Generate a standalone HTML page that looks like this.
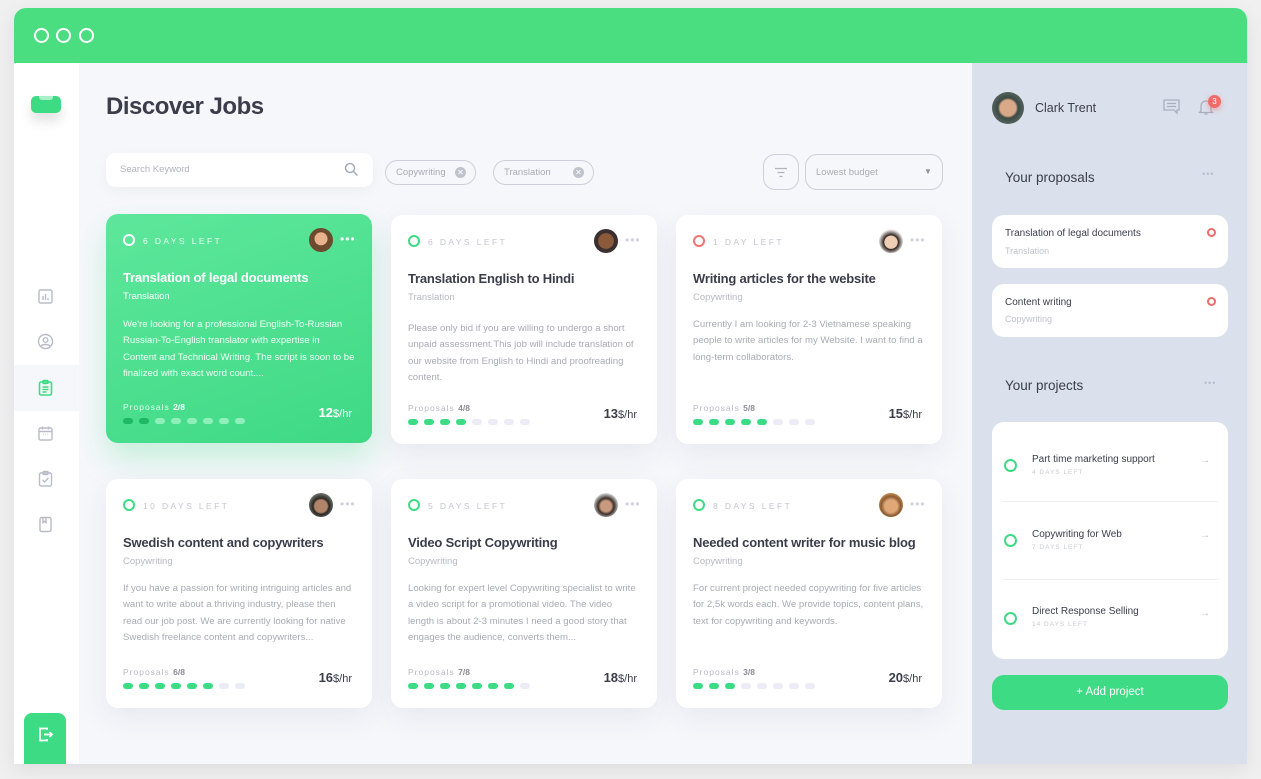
<!DOCTYPE html>
<html><head><meta charset="utf-8">
<style>
*{margin:0;padding:0;box-sizing:border-box}
body{width:1261px;height:779px;background:#f0f0f1;font-family:"Liberation Sans",sans-serif;position:relative;overflow:hidden;color:#3b3d4a}
.abs{position:absolute}
.win{position:absolute;left:14px;top:8px;width:1233px;height:756px;background:#f6f7fb;overflow:hidden;border-radius:12px 12px 0 0;box-shadow:0 6px 20px rgba(0,0,0,.08)}
.hdr{position:absolute;left:0;top:0;width:1233px;height:55px;background:#4ade80}
.hdr i{position:absolute;top:20px;width:15px;height:15px;border:2px solid #fff;border-radius:50%}
.side{position:absolute;left:0;top:55px;width:65px;height:701px;background:#fff}
.right{position:absolute;left:958px;top:55px;width:275px;height:701px;background:#dbe1ec}
.card{position:absolute;width:266px;height:229px;background:#fff;border-radius:12px;box-shadow:0 10px 30px rgba(40,50,80,.07)}
.card .c{position:absolute;left:17px;top:20px;width:12px;height:12px;border:2.5px solid #3ddc84;border-radius:50%}
.card .d{position:absolute;left:37px;top:22px;font-size:8.5px;letter-spacing:2.4px;color:#c4c6d0}
.card .av{position:absolute;left:203px;top:14px;width:24px;height:24px;border-radius:50%}
.card .m{position:absolute;left:234px;top:18px;font-size:12px;color:#cfd1dc;letter-spacing:1px}
.card .t{position:absolute;left:17px;top:56px;font-size:13px;font-weight:bold;color:#3b3d4a;letter-spacing:-.2px}
.card .k{position:absolute;left:17px;top:77px;font-size:9.5px;color:#b8bac4}
.card .p{position:absolute;left:17px;top:106px;width:232px;font-size:9.6px;line-height:16.3px;color:#a9abb5}
.card .pr{position:absolute;left:17px;top:188px;font-size:8.5px;letter-spacing:1px;color:#b8bac4}
.card .pr b{color:#8c8e99;letter-spacing:0}
.card .dots{position:absolute;left:17px;top:204px;display:flex;gap:6px}
.card .dots span{width:10px;height:6px;border-radius:3px;background:#ebecf5}
.card .dots span.on{background:#3ddc84}
.card .price{position:absolute;right:20px;top:191px;font-size:13px;font-weight:bold;color:#3b3d4a}
.card .price small{font-size:11px;font-weight:normal}
.g{background:linear-gradient(160deg,#5ee79c,#3ed985);box-shadow:0 16px 30px rgba(61,220,132,.25)}
.g .c{border-color:#fff}.g .d{color:#e8fff1}.g .m{color:#fff}.g .t,.g .k,.g .p,.g .price{color:#fff}.g .p{color:#f2fff7}
.g .pr{color:#e6ffef}.g .pr b{color:#fff}
.g .dots span{background:#8fefb8}.g .dots span.on{background:#1fb865}
.pill{position:absolute;height:25px;border:1px solid #cdd0da;border-radius:13px;font-size:9.5px;color:#a9abb5;padding:6px 10px}
.pill .x{position:absolute;right:9px;top:6px;width:11px;height:11px;border-radius:50%;background:#c0c3cc;color:#fff;font-size:8px;line-height:11px;text-align:center}
.ic{position:absolute;left:23px;width:17px;height:17px}
.pc{position:absolute;left:20px;width:236px;background:#fff;border-radius:12px}
.proj{position:absolute;left:0;width:236px;height:78px}
.proj .o{position:absolute;left:12px;width:13px;height:13px;border:2.5px solid #3ddc84;border-radius:50%}
</style></head><body>
<div class="win">
 <div class="hdr"><i style="left:20px"></i><i style="left:42px"></i><i style="left:65px"></i></div>
 <div class="side">
  <div class="abs" style="left:17px;top:33px;width:30px;height:17px;background:#3ddc84;border-radius:5px;box-shadow:0 8px 12px rgba(0,0,0,.12)"><div class="abs" style="left:8px;top:0;width:14px;height:4px;background:#a8f0c8;border-radius:0 0 3px 3px"></div></div>
  <svg class="ic" style="top:225px" viewBox="0 0 17 17" fill="none" stroke="#b9bcc8" stroke-width="1.4"><rect x="2" y="2" width="13" height="13" rx="1.5"/><path d="M6 12V8M8.5 12V6M11 12v-2"/></svg>
  <svg class="ic" style="top:270px" viewBox="0 0 17 17" fill="none" stroke="#b9bcc8" stroke-width="1.4"><circle cx="8.5" cy="8.5" r="7"/><circle cx="8.5" cy="7" r="2.3"/><path d="M4 13c1.5-2 7.5-2 9 0"/></svg>
  <div class="abs" style="left:0;top:302px;width:65px;height:46px;background:#f6f7fb"></div>
  <svg class="ic" style="top:316px" viewBox="0 0 17 17" fill="none" stroke="#3ddc84" stroke-width="1.6"><rect x="2.5" y="3" width="12" height="13" rx="1.5"/><rect x="6" y="1.5" width="5" height="3" rx="1"/><path d="M5.5 8h6M5.5 10.5h6M5.5 13h4"/></svg>
  <svg class="ic" style="top:362px" viewBox="0 0 17 17" fill="none" stroke="#b9bcc8" stroke-width="1.4"><rect x="2" y="3" width="13" height="12" rx="1.5"/><path d="M2 6.5h13M5.5 1.5v3M11.5 1.5v3M6 9.5h.5M8.3 9.5h.5M10.6 9.5h.5"/></svg>
  <svg class="ic" style="top:407px" viewBox="0 0 17 17" fill="none" stroke="#b9bcc8" stroke-width="1.4"><rect x="2.5" y="3" width="12" height="13" rx="1.5"/><rect x="6" y="1.5" width="5" height="3" rx="1"/><path d="M5.5 10l2 2 4-4"/></svg>
  <svg class="ic" style="top:453px" viewBox="0 0 17 17" fill="none" stroke="#b9bcc8" stroke-width="1.4"><rect x="3" y="1.5" width="11" height="14" rx="1.5"/><path d="M6 1.5v5l1.5-1.2L9 6.5v-5"/></svg>
  <div class="abs" style="left:10px;top:650px;width:42px;height:55px;background:#3ddc84;border-radius:8px 8px 0 0">
   <svg class="abs" style="left:13px;top:13px" width="17" height="17" viewBox="0 0 17 17" fill="none" stroke="#fff" stroke-width="1.7"><path d="M10 4V2.5H3v12h7V13M7 8.5h8M12.5 6l2.5 2.5-2.5 2.5"/></svg>
  </div>
 </div>

 <div class="abs" style="left:92px;top:85px;font-size:24px;font-weight:bold;color:#3b3d4a;letter-spacing:-.5px">Discover Jobs</div>
 <div class="abs" style="left:92px;top:145px;width:267px;height:34px;background:#fff;border-radius:10px;box-shadow:0 4px 14px rgba(0,0,0,.04)">
  <span class="abs" style="left:14px;top:11px;font-size:9.5px;color:#b1b3bd">Search Keyword</span>
  <svg class="abs" style="left:238px;top:9px" width="15" height="15" viewBox="0 0 15 15" fill="none" stroke="#a9abb5" stroke-width="1.5"><circle cx="6" cy="6" r="4.5"/><path d="M9.5 9.5l4 4"/></svg>
 </div>
 <div class="pill" style="left:371px;top:152px;width:91px">Copywriting<span class="x">✕</span></div>
 <div class="pill" style="left:479px;top:152px;width:101px">Translation<span class="x">✕</span></div>
 <div class="abs" style="left:749px;top:146px;width:36px;height:36px;border:1px solid #cdd0da;border-radius:12px">
  <svg class="abs" style="left:10px;top:12px" width="14" height="11" viewBox="0 0 14 11" stroke="#b1b3bd" stroke-width="1.2"><path d="M1 1.5h12M3.5 5.5h7M5.5 9.5h3"/></svg>
 </div>
 <div class="abs" style="left:791px;top:146px;width:138px;height:36px;border:1px solid #cdd0da;border-radius:12px">
  <span class="abs" style="left:10px;top:12px;font-size:9.5px;color:#a9abb5">Lowest budget</span>
  <span class="abs" style="left:118px;top:12px;font-size:8px;color:#8c8e99">▼</span>
 </div>

 <!-- row 1 -->
 <div class="card g" style="left:92px;top:206px">
  <div class="c"></div><div class="d">6 DAYS LEFT</div>
  <div class="av" style="background:radial-gradient(circle at 50% 45%,#e8b38c 35%,#6b4a2e 38%)"></div><div class="m">•••</div>
  <div class="t">Translation of legal documents</div><div class="k">Translation</div>
  <div class="p" style="top:103px">We're looking for a professional English-To-Russian Russian-To-English translator with expertise in Content and Technical Writing. The script is soon to be finalized with exact word count....</div>
  <div class="pr">Proposals <b>2/8</b></div>
  <div class="dots"><span class="on"></span><span class="on"></span><span></span><span></span><span></span><span></span><span></span><span></span></div>
  <div class="price">12<small>$/hr</small></div>
 </div>
 <div class="card" style="left:377px;top:207px">
  <div class="c"></div><div class="d">6 DAYS LEFT</div>
  <div class="av" style="background:radial-gradient(circle at 50% 50%,#8a5a3a 45%,#3a3030 48%)"></div><div class="m">•••</div>
  <div class="t">Translation English to Hindi</div><div class="k">Translation</div>
  <div class="p">Please only bid if you are willing to undergo a short unpaid assessment.This job will include translation of our website from English to Hindi and proofreading content.</div>
  <div class="pr">Proposals <b>4/8</b></div>
  <div class="dots"><span class="on"></span><span class="on"></span><span class="on"></span><span class="on"></span><span></span><span></span><span></span><span></span></div>
  <div class="price">13<small>$/hr</small></div>
 </div>
 <div class="card" style="left:662px;top:207px">
  <div class="c" style="border-color:#f47272"></div><div class="d">1 DAY LEFT</div>
  <div class="av" style="background:radial-gradient(circle at 50% 55%,#f0cdb5 35%,#2e2420 40%,#f4f0ee 70%)"></div><div class="m">•••</div>
  <div class="t">Writing articles for the website</div><div class="k">Copywriting</div>
  <div class="p" style="top:102px">Currently I am looking for 2-3 Vietnamese speaking people to write articles for my Website. I want to find a long-term collaborators.</div>
  <div class="pr">Proposals <b>5/8</b></div>
  <div class="dots"><span class="on"></span><span class="on"></span><span class="on"></span><span class="on"></span><span class="on"></span><span></span><span></span><span></span></div>
  <div class="price">15<small>$/hr</small></div>
 </div>
 <!-- row 2 -->
 <div class="card" style="left:92px;top:471px">
  <div class="c"></div><div class="d">10 DAYS LEFT</div>
  <div class="av" style="background:radial-gradient(circle at 50% 55%,#b08468 35%,#2b2622 45%,#7f8a80 80%)"></div><div class="m">•••</div>
  <div class="t">Swedish content and copywriters</div><div class="k">Copywriting</div>
  <div class="p" style="top:102px">If you have a passion for writing intriguing articles and want to write about a thriving industry, please then read our job post. We are currently looking for native Swedish freelance content and copywriters...</div>
  <div class="pr">Proposals <b>6/8</b></div>
  <div class="dots"><span class="on"></span><span class="on"></span><span class="on"></span><span class="on"></span><span class="on"></span><span class="on"></span><span></span><span></span></div>
  <div class="price">16<small>$/hr</small></div>
 </div>
 <div class="card" style="left:377px;top:471px">
  <div class="c"></div><div class="d">5 DAYS LEFT</div>
  <div class="av" style="background:radial-gradient(circle at 50% 55%,#c99a80 30%,#3a302a 45%,#e8e8e8 75%)"></div><div class="m">•••</div>
  <div class="t">Video Script Copywriting</div><div class="k">Copywriting</div>
  <div class="p" style="top:102px">Looking for expert level Copywriting specialist to write a video script for a promotional video. The video length is about 2-3 minutes I need a good story that engages the audience, converts them...</div>
  <div class="pr">Proposals <b>7/8</b></div>
  <div class="dots"><span class="on"></span><span class="on"></span><span class="on"></span><span class="on"></span><span class="on"></span><span class="on"></span><span class="on"></span><span></span></div>
  <div class="price">18<small>$/hr</small></div>
 </div>
 <div class="card" style="left:662px;top:471px">
  <div class="c"></div><div class="d">8 DAYS LEFT</div>
  <div class="av" style="background:radial-gradient(circle at 50% 55%,#e0a878 35%,#8a5a30 55%,#d9a060 80%)"></div><div class="m">•••</div>
  <div class="t">Needed content writer for music blog</div><div class="k">Copywriting</div>
  <div class="p" style="top:102px">For current project needed copywriting for five articles for 2,5k words each. We provide topics, content plans, text for copywriting and keywords.</div>
  <div class="pr">Proposals <b>3/8</b></div>
  <div class="dots"><span class="on"></span><span class="on"></span><span class="on"></span><span></span><span></span><span></span><span></span><span></span></div>
  <div class="price">20<small>$/hr</small></div>
 </div>

 <!-- right panel -->
 <div class="right">
  <div class="abs" style="left:20px;top:29px;width:32px;height:32px;border-radius:50%;background:radial-gradient(circle at 50% 50%,#d9a888 35%,#3b4a44 45%,#5d6b66 80%)"></div>
  <div class="abs" style="left:63px;top:38px;font-size:12.5px;color:#3b3d4a">Clark Trent</div>
  <svg class="abs" style="left:191px;top:36px" width="17" height="16" viewBox="0 0 17 16" fill="none" stroke="#a9afbf" stroke-width="1.3"><path d="M1 1h15v10h-2v3l-3-3H1z"/><path d="M4 4.5h9M4 7.5h9"/></svg>
  <svg class="abs" style="left:226px;top:36px" width="16" height="17" viewBox="0 0 16 17" fill="none" stroke="#a9afbf" stroke-width="1.3"><path d="M3 12V7a5 5 0 0110 0v5l1.5 1.5h-13zM6.5 15h3"/></svg>
  <div class="abs" style="left:236px;top:32px;width:13px;height:13px;border-radius:50%;background:#f26b6b;color:#fff;font-size:8px;text-align:center;line-height:13px;box-shadow:0 2px 6px rgba(242,107,107,.5)">3</div>
  <div class="abs" style="left:33px;top:107px;font-size:13.5px;color:#3b3d4a">Your proposals</div>
  <div class="abs" style="left:230px;top:106px;font-size:9px;color:#b8becd;letter-spacing:1px">•••</div>
  <div class="pc" style="top:152px;height:53px">
   <div class="abs" style="left:13px;top:13px;font-size:10px;color:#3b3d4a">Translation of legal documents</div>
   <div class="abs" style="left:13px;top:31px;font-size:9px;color:#c0c3cc">Translation</div>
   <div class="abs" style="left:215px;top:13px;width:9px;height:9px;border:2.5px solid #f26b6b;border-radius:50%"></div>
  </div>
  <div class="pc" style="top:221px;height:53px">
   <div class="abs" style="left:13px;top:13px;font-size:10px;color:#3b3d4a">Content writing</div>
   <div class="abs" style="left:13px;top:30px;font-size:9px;color:#c0c3cc">Copywriting</div>
   <div class="abs" style="left:215px;top:13px;width:9px;height:9px;border:2.5px solid #f26b6b;border-radius:50%"></div>
  </div>
  <div class="abs" style="left:33px;top:315px;font-size:13.5px;color:#3b3d4a">Your projects</div>
  <div class="abs" style="left:232px;top:315px;font-size:9px;color:#b8becd;letter-spacing:1px">•••</div>
  <div class="pc" style="top:359px;height:237px">
   <div class="proj" style="top:0"><div class="o" style="top:37px"></div><div class="abs" style="left:40px;top:32px;font-size:10px;color:#3b3d4a">Part time marketing support</div><div class="abs" style="left:40px;top:47px;font-size:6.5px;letter-spacing:1px;color:#c8cbd3">4 DAYS LEFT</div><div class="abs" style="left:208px;top:33px;font-size:10px;color:#b8becd">→</div></div>
   <div class="abs" style="left:10px;top:79px;width:216px;height:1px;background:#eef0f4"></div>
   <div class="proj" style="top:78px"><div class="o" style="top:34px"></div><div class="abs" style="left:40px;top:29px;font-size:10px;color:#3b3d4a">Copywriting for Web</div><div class="abs" style="left:40px;top:44px;font-size:6.5px;letter-spacing:1px;color:#c8cbd3">7 DAYS LEFT</div><div class="abs" style="left:208px;top:30px;font-size:10px;color:#b8becd">→</div></div>
   <div class="abs" style="left:10px;top:157px;width:216px;height:1px;background:#eef0f4"></div>
   <div class="proj" style="top:156px"><div class="o" style="top:34px"></div><div class="abs" style="left:40px;top:28px;font-size:10px;color:#3b3d4a">Direct Response Selling</div><div class="abs" style="left:40px;top:43px;font-size:6.5px;letter-spacing:1px;color:#c8cbd3">14 DAYS LEFT</div><div class="abs" style="left:208px;top:30px;font-size:10px;color:#b8becd">→</div></div>
  </div>
  <div class="abs" style="left:20px;top:612px;width:236px;height:35px;background:#3ddc84;border-radius:12px;color:#fff;font-size:11.5px;text-align:center;line-height:35px">+ Add project</div>
 </div>
</div>
</body></html>
